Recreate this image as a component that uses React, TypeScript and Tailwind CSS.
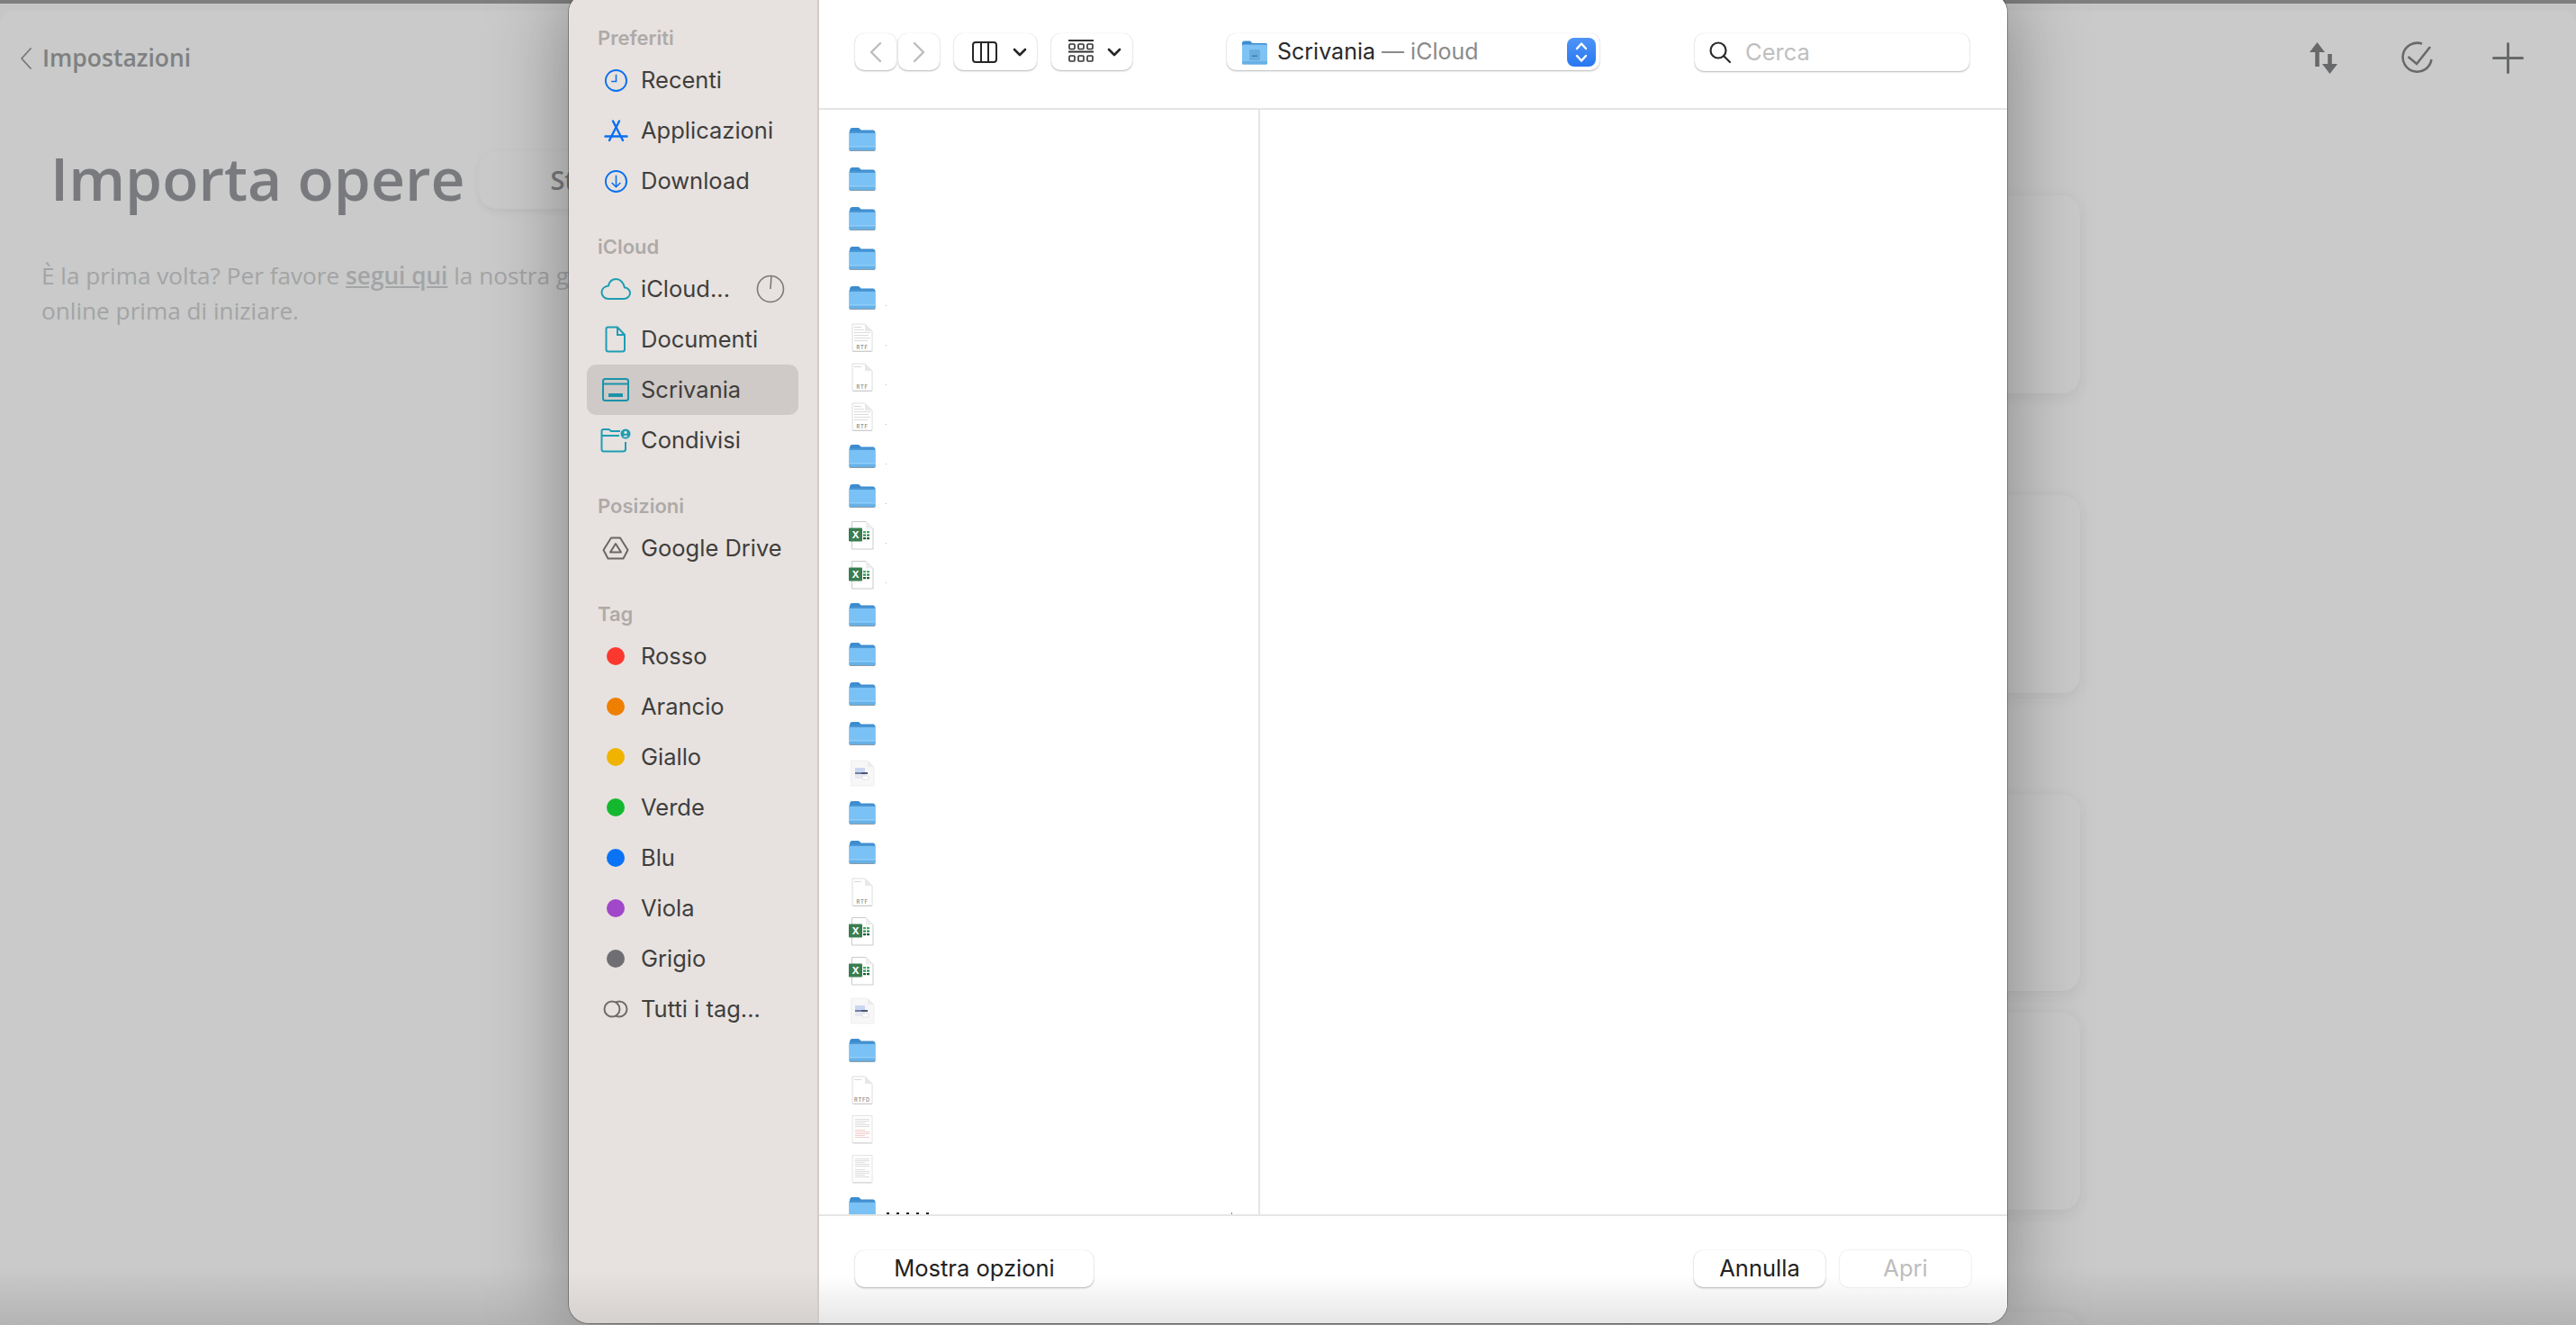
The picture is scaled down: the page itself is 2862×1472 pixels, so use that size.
import React from 'react';

type FileKind = 'folder' | 'rtf' | 'rtfBlank' | 'rtfd' | 'xls' | 'img' | 'pdf' | 'pdfRed';

const files: FileKind[] = [
  'folder', 'folder', 'folder', 'folder', 'folder',
  'rtf', 'rtfBlank', 'rtf',
  'folder', 'folder',
  'xls', 'xls',
  'folder', 'folder', 'folder', 'folder',
  'img',
  'folder', 'folder',
  'rtfBlank',
  'xls', 'xls',
  'img',
  'folder',
  'rtfd',
  'pdfRed', 'pdf',
  'folder',
];

const BLUE = '#0a6ff0';
const TEAL = '#1f9db3';

function FolderGlyph() {
  return (
    <svg width="30" height="36" viewBox="0 0 30 36">
      <path d="M1 9 Q1 5 4 5 H10 Q11.5 5 12.5 6.2 L13.5 7.5 H27 Q29 7.5 29 9.5 V14 H1 Z" fill="#3c8ccf" />
      <rect x="0.5" y="10" width="29" height="21" rx="1.5" fill="#889cab" />
      <rect x="0.5" y="9.5" width="29" height="20.5" rx="1.5" fill="#7ac1f5" />
      <rect x="0.5" y="9.5" width="29" height="1.2" fill="#3a86c8" />
      <rect x="0.5" y="25" width="29" height="1" fill="#90cdf6" />
      <rect x="0.5" y="27" width="29" height="3" rx="1" fill="#67b1e6" />
    </svg>
  );
}

function PaperOutline({ stroke = '#d6d6d6' }: { stroke?: string }) {
  return (
    <>
      <path d="M4 3 H18 L26 11 V33 H4 Z" fill="#ffffff" stroke={stroke} strokeWidth="0.8" />
      <path d="M18 3 V11 H26 Z" fill="#e8e8e8" />
      <rect x="4.5" y="33" width="21" height="1" fill="#cccccc" />
    </>
  );
}

function RtfGlyph({ label, lines }: { label: string; lines: boolean }) {
  return (
    <svg width="30" height="36" viewBox="0 0 30 36">
      <PaperOutline />
      <rect x="6" y="6" width="8" height="1" fill="#d8d8d8" />
      {lines && (
        <g fill="#dcdcdc">
          <rect x="6" y="9" width="11" height="1" />
          <rect x="6" y="12" width="18" height="1" />
          <rect x="6" y="15" width="16" height="1" />
          <rect x="6" y="18" width="18" height="1" />
          <rect x="6" y="21" width="15" height="1" />
        </g>
      )}
      <text x="15" y="31" textAnchor="middle" fontSize="5.6" letterSpacing="0.8" fontFamily="Inter, sans-serif" fontWeight="600" fill="#909090">
        {label}
      </text>
    </svg>
  );
}

function XlsGlyph() {
  return (
    <svg width="30" height="36" viewBox="0 0 30 36">
      <path d="M3.5 2.5 H19 L27 10.5 V33 H3.5 Z" fill="#ffffff" stroke="#c4c4c4" strokeWidth="0.9" />
      <path d="M19 2.5 V10.5 H27 Z" fill="#eeeeee" />
      <g fill="#49a86a">
        <rect x="16" y="13" width="3" height="2.2" />
        <rect x="20" y="13" width="3" height="2.2" />
      </g>
      <g fill="#2f8a54">
        <rect x="16" y="16.5" width="3" height="2.2" />
        <rect x="20" y="16.5" width="3" height="2.2" />
      </g>
      <g fill="#1d5c38">
        <rect x="16" y="20" width="3" height="2.2" />
        <rect x="20" y="20" width="3" height="2.2" />
      </g>
      <rect x="0" y="9.5" width="15" height="15" rx="1" fill="#3a7d50" />
      <text x="7.5" y="21" textAnchor="middle" fontSize="11" fontWeight="700" fontFamily="Inter, sans-serif" fill="#ffffff">
        X
      </text>
    </svg>
  );
}

function ImgGlyph() {
  return (
    <svg width="30" height="36" viewBox="0 0 30 36">
      <path d="M2.5 4 H21 L28 11 V32 H2.5 Z" fill="#f7f7f7" stroke="#ececec" strokeWidth="0.8" />
      <path d="M21 4 V11 H28 Z" fill="#ececec" />
      <rect x="7" y="12" width="11" height="5" fill="#c9d6f2" />
      <rect x="7" y="17" width="13" height="2" fill="#6f7fa8" />
      <rect x="14" y="17" width="7" height="2" fill="#4a5570" />
      <rect x="7" y="19" width="11" height="5" fill="#e6e9f0" />
      <rect x="15" y="21" width="7" height="4" rx="1" fill="#ffffff" stroke="#c8c8c8" strokeWidth="0.5" />
    </svg>
  );
}

function PdfGlyph({ red }: { red: boolean }) {
  const rows = [6, 8, 10, 12, 14, 18, 20, 22, 24, 26];
  return (
    <svg width="30" height="36" viewBox="0 0 30 36">
      <rect x="4" y="2.5" width="22" height="30" fill="#fdfdfd" stroke="#dedede" strokeWidth="0.8" />
      <rect x="4.5" y="32.5" width="21" height="1" fill="#cfcfcf" />
      {rows.map((y, i) => (
        <rect key={y} x="7" y={y} width={i % 3 === 2 ? 11 : 16} height="0.8" fill={red && i > 4 ? '#f0c4c0' : '#d8d8d8'} />
      ))}
    </svg>
  );
}

function FileGlyph({ kind }: { kind: FileKind }) {
  if (kind === 'folder') return <FolderGlyph />;
  if (kind === 'rtf') return <RtfGlyph label="RTF" lines />;
  if (kind === 'rtfBlank') return <RtfGlyph label="RTF" lines={false} />;
  if (kind === 'rtfd') return <RtfGlyph label="RTFD" lines={false} />;
  if (kind === 'xls') return <XlsGlyph />;
  if (kind === 'img') return <ImgGlyph />;
  return <PdfGlyph red={kind === 'pdfRed'} />;
}

function SideIcon({ name }: { name: string }) {
  if (name === 'clock')
    return (
      <svg width="27" height="27" viewBox="0 0 28 28" fill="none" stroke={BLUE} strokeWidth="2">
        <circle cx="14" cy="14" r="12" />
        <path d="M14 7 V15 H8.5" strokeWidth="1.6" />
      </svg>
    );
  if (name === 'apps')
    return (
      <svg width="27" height="25" viewBox="0 0 27 25" fill="none" stroke={BLUE} strokeWidth="2.4" strokeLinecap="round" strokeLinejoin="round">
        <path d="M10 1.5 L21 23" />
        <path d="M17 1.5 L6 23" />
        <path d="M1.5 18.5 H25.5" />
      </svg>
    );
  if (name === 'download')
    return (
      <svg width="27" height="27" viewBox="0 0 28 28" fill="none" stroke={BLUE} strokeWidth="2">
        <circle cx="14" cy="14" r="12" />
        <path d="M14 7 V20 M9 15.5 L14 20.5 L19 15.5" strokeWidth="1.6" />
      </svg>
    );
  if (name === 'cloud')
    return (
      <svg width="34" height="26" viewBox="0 0 34 26" fill="none" stroke={TEAL} strokeWidth="2">
        <path d="M9 24 H26 C30 24 33 21 33 17.5 C33 14 30 11.5 27 11.5 C26 6 22 2 17.5 2 C13 2 10 5 9 9.5 C4.5 10 1.5 13 1.5 17 C1.5 21 5 24 9 24 Z" />
      </svg>
    );
  if (name === 'doc')
    return (
      <svg width="24" height="30" viewBox="0 0 24 30" fill="none" stroke={TEAL} strokeWidth="2">
        <path d="M3.5 1.5 H14 L22 10 V26 Q22 28.5 19.5 28.5 H4 Q1.5 28.5 1.5 26 V3.5 Q1.5 1.5 3.5 1.5 Z" />
        <path d="M14 1.5 V10 H22" />
      </svg>
    );
  if (name === 'desk')
    return (
      <svg width="30" height="26" viewBox="0 0 30 26" fill="none" stroke="#1a93aa" strokeWidth="2">
        <rect x="1" y="1" width="28" height="24" rx="2.5" />
        <path d="M1 6.5 H29" />
        <rect x="7" y="17" width="16" height="4" rx="0.5" fill="#1a93aa" stroke="none" />
      </svg>
    );
  if (name === 'shared')
    return (
      <svg width="34" height="28" viewBox="0 0 34 28" fill="none" stroke={TEAL} strokeWidth="2">
        <path d="M22 4 H12 L9.5 2 H3.5 Q1.5 2 1.5 4 V24 Q1.5 26.5 4 26.5 H25 Q28 26.5 28 24 V16" />
        <path d="M1.5 9 H21" />
        <circle cx="28" cy="7" r="5.5" fill={TEAL} stroke="none" />
        <circle cx="28" cy="5.4" r="1.7" fill="#e7e2df" stroke="none" />
        <path d="M25.2 10.4 Q28 6.6 30.8 10.4 Z" fill="#e7e2df" stroke="none" />
      </svg>
    );
  if (name === 'drive')
    return (
      <svg width="30" height="26" viewBox="0 0 30 26" fill="none" stroke="#6a6765" strokeWidth="2" strokeLinejoin="round">
        <path d="M10 1.5 H20 L28.5 15 L23.5 24.5 H6.5 L1.5 15 Z" />
        <path d="M15 8 L21 17.5 H9 Z" />
      </svg>
    );
  if (name === 'tags')
    return (
      <svg width="28" height="20" viewBox="0 0 28 20" fill="none" stroke="#6f6c6a" strokeWidth="2">
        <circle cx="18" cy="10" r="8.5" />
        <circle cx="10" cy="10" r="8.5" fill="#e7e2df" />
      </svg>
    );
  return <span className="block w-[20px] h-[20px] rounded-full" style={{ backgroundColor: name }} />;
}

function SideRow({ icon, label, active, progress }: { icon: string; label: string; active?: boolean; progress?: boolean }) {
  return (
    <div className={`flex items-center h-14 ml-5 mr-[21px] pl-3 rounded-[10px] ${active ? 'bg-[#cfcac7]' : ''}`}>
      <span className="w-10 flex items-center justify-center">
        <SideIcon name={icon} />
      </span>
      <span className="ml-2 text-[25.5px] text-[#403e3d]">{label}</span>
      {progress && (
        <svg className="ml-auto mr-[15px]" width="32" height="32" viewBox="0 0 32 32" fill="none" stroke="#7d7976" strokeWidth="1.6">
          <circle cx="16" cy="16" r="14.5" />
          <path d="M16 16 L17 1.5" />
        </svg>
      )}
    </div>
  );
}

function SideHeader({ label, first }: { label: string; first?: boolean }) {
  return (
    <div className={`h-[38px] flex items-center pl-8 text-[22px] font-semibold text-[#aeaaa8] ${first ? '' : 'mt-[26px]'}`}>
      {label}
    </div>
  );
}

function ToolButton({ className, children }: { className: string; children: React.ReactNode }) {
  return (
    <div className={`h-[41px] bg-white rounded-[10px] shadow-[0_1px_2px_rgba(0,0,0,0.28),0_0_1px_rgba(0,0,0,0.15)] flex items-center ${className}`}>
      {children}
    </div>
  );
}

function SmallChevron() {
  return (
    <svg width="16" height="10" viewBox="0 0 16 10" fill="none" stroke="#262626" strokeWidth="2.6" strokeLinecap="round" strokeLinejoin="round">
      <path d="M2 2 L8 8 L14 2" />
    </svg>
  );
}

function FileDialog() {
  return (
    <div className="absolute left-[632px] -top-2 w-[1598px] h-[1478px] rounded-[22px] overflow-hidden flex font-['Inter',sans-serif] shadow-[0_0_0_1px_rgba(0,0,0,0.3),0_0_90px_rgba(0,0,0,0.36)]">
      <aside className="w-[278px] pt-[31px] border-r-2 border-[#cfcbc8] bg-[linear-gradient(to_bottom,#e7e2df_96%,#d5d1ce_100%)]">
        <SideHeader label="Preferiti" first />
        <SideRow icon="clock" label="Recenti" />
        <SideRow icon="apps" label="Applicazioni" />
        <SideRow icon="download" label="Download" />
        <SideHeader label="iCloud" />
        <SideRow icon="cloud" label="iCloud..." progress />
        <SideRow icon="doc" label="Documenti" />
        <SideRow icon="desk" label="Scrivania" active />
        <SideRow icon="shared" label="Condivisi" />
        <SideHeader label="Posizioni" />
        <SideRow icon="drive" label="Google Drive" />
        <SideHeader label="Tag" />
        <SideRow icon="#fb3830" label="Rosso" />
        <SideRow icon="#ee7f00" label="Arancio" />
        <SideRow icon="#f0b400" label="Giallo" />
        <SideRow icon="#14b82f" label="Verde" />
        <SideRow icon="#0a72f5" label="Blu" />
        <SideRow icon="#a147c9" label="Viola" />
        <SideRow icon="#6f6e72" label="Grigio" />
        <SideRow icon="tags" label="Tutti i tag..." />
      </aside>

      <div className="flex-1 flex flex-col bg-white min-w-0">
        {/* toolbar */}
        <div className="h-[130px] shrink-0 border-b-2 border-[#e5e5e5] pt-[45px] pl-10 flex items-start">
          <ToolButton className="w-[46px] justify-center">
            <svg width="14" height="24" viewBox="0 0 14 24" fill="none" stroke="#bdbdbd" strokeWidth="2.4" strokeLinecap="round" strokeLinejoin="round">
              <path d="M12 2 L2 12 L12 22" />
            </svg>
          </ToolButton>
          <ToolButton className="w-[46px] ml-0.5 justify-center">
            <svg width="14" height="24" viewBox="0 0 14 24" fill="none" stroke="#bdbdbd" strokeWidth="2.4" strokeLinecap="round" strokeLinejoin="round">
              <path d="M2 2 L12 12 L2 22" />
            </svg>
          </ToolButton>
          <ToolButton className="w-[92px] ml-4 pl-5 gap-[17px]">
            <svg width="28" height="24" viewBox="0 0 28 24" fill="none" stroke="#262626" strokeWidth="2">
              <rect x="1" y="1" width="26" height="22" rx="3" />
              <path d="M10 1 V23 M18 1 V23" />
            </svg>
            <SmallChevron />
          </ToolButton>
          <ToolButton className="w-[90px] ml-4 pl-[19px] gap-[15px]">
            <svg width="28" height="27" viewBox="0 0 28 27" fill="none" stroke="#333333" strokeWidth="1.6">
              <path d="M0 1 H28 M0 13.5 H28" strokeWidth="2" />
              <rect x="1" y="5" width="6" height="5.5" rx="1" />
              <rect x="11" y="5" width="6" height="5.5" rx="1" />
              <rect x="21" y="5" width="6" height="5.5" rx="1" />
              <rect x="1" y="18" width="6" height="6" rx="1" />
              <rect x="11" y="18" width="6" height="6" rx="1" />
              <rect x="21" y="18" width="6" height="6" rx="1" />
            </svg>
            <SmallChevron />
          </ToolButton>
          <ToolButton className="w-[414px] ml-[105px] pl-4 pr-1">
            <svg width="30" height="28" viewBox="0 0 30 28">
              <path d="M1 4 Q1 1.5 3.5 1.5 H10 L12.5 4 H27 Q29 4 29 6 V10 H1 Z" fill="#3c8ccf" />
              <rect x="1" y="5.5" width="28" height="22" rx="1.5" fill="#7fc3f4" />
              <rect x="9" y="11" width="12" height="12" rx="1.5" fill="#69abdc" />
              <rect x="12" y="17.5" width="6" height="1.4" fill="#3a7cb3" />
              <rect x="1" y="24" width="28" height="3.5" rx="1" fill="#67b0e6" />
            </svg>
            <span className="ml-[10px] text-[25px] text-[#2a2a2a]">
              Scrivania <span className="text-[#8a8a8a]">— iCloud</span>
            </span>
            <span className="ml-auto w-8 h-8 rounded-lg bg-[linear-gradient(to_bottom,#4d94f8,#2877f0)] flex items-center justify-center">
              <svg width="16" height="26" viewBox="0 0 16 26" fill="none" stroke="#ffffff" strokeWidth="2.4" strokeLinecap="round" strokeLinejoin="round">
                <path d="M3 9 L8 3.5 L13 9 M3 17 L8 22.5 L13 17" />
              </svg>
            </span>
          </ToolButton>
          <ToolButton className="w-[305px] h-[42px] ml-[106px] pl-[15px]">
            <svg width="26" height="26" viewBox="0 0 26 26" fill="none" stroke="#2a2a2a" strokeWidth="2.2" strokeLinecap="round">
              <circle cx="11" cy="11" r="8.5" />
              <path d="M17.5 17.5 L24 24" />
            </svg>
            <span className="ml-[15px] text-[25.5px] text-[#bfbfbf]">Cerca</span>
          </ToolButton>
        </div>

        {/* columns */}
        <div className="flex-1 min-h-0 flex overflow-hidden">
          <div className="w-[490px] shrink-0 border-r-2 border-[#e5e5e5] pt-[11px] pl-[33px]">
            {files.map((kind, i) => (
              <div key={i} className="h-11 flex items-center">
                <span className="w-[30px] shrink-0 flex items-center justify-center">
                  <FileGlyph kind={kind} />
                </span>
                {i >= 4 && i <= 11 && <span className="ml-[11px] mt-4 w-px h-px bg-[#b8b8b8]" />}
                {i === files.length - 1 && (
                  <span className="self-start mt-[26px] ml-3 flex gap-2">
                    <span className="w-[3px] h-1 bg-[#222]" />
                    <span className="w-[3px] h-1 bg-[#222]" />
                    <span className="w-[3px] h-1 bg-[#222]" />
                    <span className="w-[3px] h-1 bg-[#222]" />
                    <span className="w-[3px] h-1 bg-[#222]" />
                    <span className="w-px h-1 ml-[328px] bg-[#888]" />
                  </span>
                )}
              </div>
            ))}
          </div>
          <div className="flex-1" />
        </div>

        {/* footer */}
        <div className="h-[121px] shrink-0 border-t-2 border-[#e5e5e5] px-10 pt-[38px] flex items-start bg-[linear-gradient(to_bottom,#ffffff_55%,#e6e6e6_100%)]">
          <button className="w-[265px] h-[41px] rounded-[10px] bg-white text-[25.5px] text-[#222] shadow-[0_1px_2px_rgba(0,0,0,0.28),0_0_1px_rgba(0,0,0,0.15)]">
            Mostra opzioni
          </button>
          <button className="w-[146px] h-[41px] ml-auto rounded-[10px] bg-white text-[25.5px] text-[#222] shadow-[0_1px_2px_rgba(0,0,0,0.28),0_0_1px_rgba(0,0,0,0.15)]">
            Annulla
          </button>
          <button className="w-[146px] h-[41px] ml-4 rounded-[10px] bg-white/70 text-[25.5px] text-[#bdbdbd] shadow-[0_0_2px_rgba(0,0,0,0.2)]">
            Apri
          </button>
        </div>
      </div>
    </div>
  );
}

function BackCard({ className }: { className: string }) {
  return <div className={`rounded-[20px] bg-[#c9cac9] shadow-[0_4px_16px_rgba(60,50,60,0.08)] ${className}`} />;
}

export default function App() {
  return (
    <div className="relative w-[2862px] h-[1472px] overflow-hidden bg-[#c5c6c5] font-['Open_Sans',sans-serif]">
      <div className="h-1 bg-[#7f7f7f]" />

      {/* page behind the sheet */}
      <div className="mt-2 h-[1460px] rounded-t-[14px] bg-[#c9cac9] flex flex-col">
        <header className="h-[104px] shrink-0 flex items-center justify-between pl-[23px] pr-[58px]">
          <div className="flex items-center gap-3 pt-0.5 text-[#7f8082] text-[26.5px] font-semibold">
            <svg width="12" height="24" viewBox="0 0 12 24" fill="none" stroke="#77787a" strokeWidth="1.8" strokeLinecap="round" strokeLinejoin="round">
              <path d="M11 1 L1 12 L11 23" />
            </svg>
            <span>Impostazioni</span>
          </div>
          <div className="flex items-center">
            <svg width="31" height="35" viewBox="0 0 31 35" fill="#68696a">
              <path d="M8.5 0 L17 11 H10.8 V27 H6.2 V11 H0 Z" />
              <path d="M22.5 35 L31 24 H24.8 V13 H20.2 V24 H14 Z" />
            </svg>
            <svg className="ml-[70px]" width="36" height="36" viewBox="0 0 36 36" fill="none" stroke="#68696a" strokeWidth="2.6">
              <path d="M24 2.6 A16 16 0 1 0 34.4 20" />
              <path d="M8.5 17 L18 25 L33 6" />
            </svg>
            <svg className="ml-[66px]" width="35" height="35" viewBox="0 0 35 35" fill="none" stroke="#68696a" strokeWidth="3" strokeLinecap="round">
              <path d="M17.5 1.5 V33.5 M1.5 17.5 H33.5" />
            </svg>
          </div>
        </header>

        <div className="flex-1 flex min-h-0">
          <div className="w-[1811px] shrink-0 pt-[52px] pl-[46px]">
            <div className="flex items-center h-16 pl-[10px]">
              <h1 className="pb-[5px] text-[66px] font-semibold text-[#797a7e] whitespace-nowrap">Importa opere</h1>
              <div className="ml-4 w-[300px] h-16 rounded-[20px] bg-[#cacaca] shadow-[0_3px_10px_rgba(0,0,0,0.06)] pl-[79px] flex items-center text-[29px] font-semibold text-[#797a7e]">
                Stato
              </div>
            </div>
            <p className="mt-[55px] text-[26.2px] leading-[39px] text-[#a3a4a6] whitespace-nowrap">
              È la prima volta? Per favore <span className="font-semibold underline">segui qui</span> la nostra guida
              <br />
              online prima di iniziare.
            </p>
          </div>
          <div className="w-[500px] shrink-0 pt-[101px]">
            <BackCard className="h-[220px]" />
            <BackCard className="h-[220px] mt-[113px]" />
            <BackCard className="h-[218px] mt-[113px]" />
            <BackCard className="h-[219px] mt-6" />
            <BackCard className="h-[219px] mt-[114px]" />
          </div>
        </div>
      </div>

      <div className="absolute left-0 right-0 bottom-0 h-[64px] bg-[linear-gradient(to_bottom,rgba(0,0,0,0),rgba(0,0,0,0.11))]" />

      <FileDialog />
    </div>
  );
}
